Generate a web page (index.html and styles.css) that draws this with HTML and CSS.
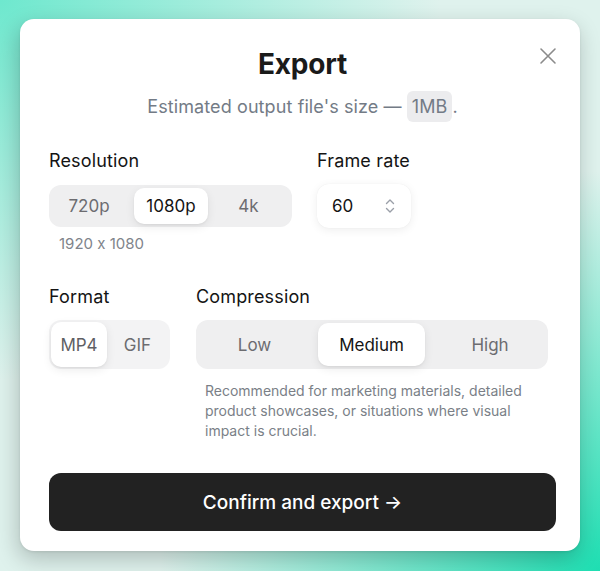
FILE: index.html
```html
<!DOCTYPE html>
<html lang="en">
<head>
<meta charset="utf-8">
<title>Export</title>
<link rel="stylesheet" href="styles.css">
</head>
<body>
<div class="stage">
  <section class="card">
    <button class="close" aria-label="Close">
      <svg width="18" height="18" viewBox="0 0 18 18"><path d="M2 2L16 16M16 2L2 16" stroke="#8b8b8b" stroke-width="1.6" stroke-linecap="round" fill="none"/></svg>
    </button>
    <h1 class="title">Export</h1>
    <p class="subtitle">Estimated output file's size — <span class="chip">1MB</span>.</p>

    <div class="row row-one">
      <div class="field res">
        <div class="label">Resolution</div>
        <div class="seg seg-res">
          <span class="opt w720">720p</span>
          <span class="opt on w1080">1080p</span>
          <span class="opt w4k">4k</span>
        </div>
        <div class="hint">1920 x 1080</div>
      </div>
      <div class="field">
        <div class="label">Frame rate</div>
        <div class="select">
          <span class="val">60</span>
          <svg width="12" height="18" viewBox="0 0 12 18"><path d="M2.5 6.5L6 3L9.5 6.5M2.5 11.5L6 15L9.5 11.5" stroke="#9a9fa8" stroke-width="1.4" stroke-linecap="round" stroke-linejoin="round" fill="none"/></svg>
        </div>
      </div>
    </div>

    <div class="row row-two">
      <div class="field">
        <div class="label">Format</div>
        <div class="seg seg-fmt">
          <span class="opt on wmp4">MP4</span>
          <span class="opt wgif">GIF</span>
        </div>
      </div>
      <div class="field comp">
        <div class="label">Compression</div>
        <div class="seg seg-comp">
          <span class="opt wlow">Low</span>
          <span class="opt on wmed">Medium</span>
          <span class="opt whigh">High</span>
        </div>
        <p class="desc">Recommended for marketing materials, detailed product showcases, or situations where visual impact is crucial.</p>
      </div>
    </div>

    <button class="confirm">Confirm and export →</button>
  </section>
</div>
</body>
</html>
```

FILE: styles.css
```css
* { box-sizing: border-box; }
html, body { margin: 0; padding: 0; }
body {
  width: 600px;
  height: 571px;
  overflow: hidden;
  font-family: Inter, "Noto Sans", "Liberation Sans", sans-serif;
  font-feature-settings: "calt" 0;
  background:
    radial-gradient(ellipse 440px 380px at 0% 0%, rgba(110,232,206,1), rgba(110,232,206,0) 100%),
    radial-gradient(ellipse 440px 400px at 100% 100%, rgba(30,222,178,1), rgba(30,222,178,0) 100%),
    #dff2ed;
}
.stage {
  padding: 19px 20px 20px 20px;
}
.card {
  position: relative;
  background: #fff;
  border-radius: 14px;
  height: 532px;
  padding: 28px 24px 20px 29px;
  box-shadow: -2px 8px 22px rgba(0,0,0,0.22), 0 1px 3px rgba(0,0,0,0.08);
}
.close {
  position: absolute;
  top: 27px;
  right: 22px;
  width: 20px;
  height: 20px;
  padding: 0;
  border: 0;
  background: none;
  display: flex;
  align-items: center;
  justify-content: center;
}
.title {
  margin: 0;
  text-align: center;
  font-size: 28px;
  line-height: 34px;
  font-weight: 700;
  color: #1a1a1a;
  letter-spacing: -0.2px;
}
.subtitle {
  margin: 10px 0 0;
  text-align: center;
  font-size: 18px;
  line-height: 31px;
  color: #737b86;
  letter-spacing: 0.1px;
}
.chip {
  display: inline-block;
  background: #ececee;
  border-radius: 6px;
  padding: 0 5px;
  line-height: 31px;
}
.row {
  display: flex;
  align-items: flex-start;
}
.row-one { margin-top: 27px; gap: 25px; }
.row-two { margin-top: 31px; gap: 26px; }
.field { display: flex; flex-direction: column; align-items: flex-start; }
.label {
  font-size: 18px;
  line-height: 24px;
  color: #141414;
  letter-spacing: 0.15px;
}
.seg {
  margin-top: 12px;
  display: flex;
  align-items: stretch;
  background: #efeff0;
  border-radius: 12px;
  padding: 3px;
}
.opt {
  display: flex;
  align-items: center;
  justify-content: center;
  font-size: 17px;
  color: #6c6c70;
  border-radius: 10px;
}
.opt.on {
  background: #fff;
  color: #141414;
  box-shadow: 0 3px 10px rgba(0,0,0,0.08), 0 1px 2px rgba(0,0,0,0.05);
}
.seg-res { height: 42px; width: 243px; }
.w720 { width: 82px; padding-right: 8px; }
.w1080 { width: 74px; }
.w4k { width: 81px; }
.hint {
  margin-top: 7px;
  padding-left: 10px;
  font-size: 15px;
  line-height: 20px;
  color: #80848b;
}
.select {
  margin-top: 11px;
  width: 94px;
  height: 44px;
  border-radius: 12px;
  background: #fff;
  box-shadow: 0 2px 10px rgba(0,0,0,0.07), 0 0 1px rgba(0,0,0,0.08);
  display: flex;
  align-items: center;
  justify-content: space-between;
  padding: 0 15px 0 15px;
}
.val { font-size: 17px; color: #141414; }
.seg-fmt { height: 49px; width: 121px; background: #f3f3f4; padding: 2px; margin-top: 11px; }
.seg-fmt .opt.on { color: #5f5f64; }
.wmp4 { width: 56px; }
.wgif { flex: 1; }
.seg-comp { height: 49px; width: 352px; margin-top: 11px; }
.wlow { width: 119px; padding-right: 8px; }
.wmed { width: 107px; }
.whigh { flex: 1; padding-left: 10px; }
.desc {
  margin: 12px 0 0;
  width: 352px;
  padding-left: 9px;
  font-size: 14px;
  line-height: 20px;
  color: #7a7f87;
}
.confirm {
  display: block;
  width: 100%;
  margin-top: 32px;
  height: 58px;
  border: 0;
  border-radius: 12px;
  background: #222222;
  color: #fff;
  font-family: inherit;
  font-size: 19px;
  font-weight: 500;
}
```
